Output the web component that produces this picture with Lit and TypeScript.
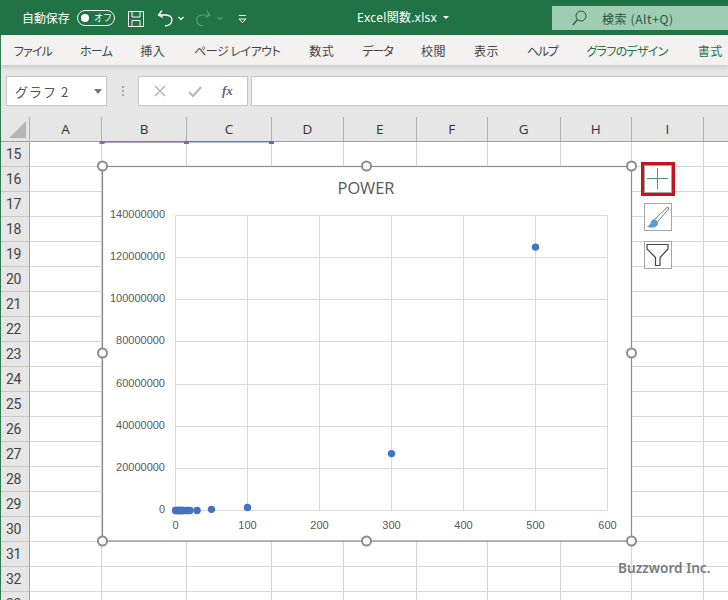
import { LitElement, html, css, svg } from "lit";
import { customElement } from "lit/decorators.js";

const JP = `"Noto Sans CJK JP", "Noto Sans", sans-serif`;
const COLS: [string, number][] = [
  ["A", 72], ["B", 85], ["C", 85], ["D", 72], ["E", 72.5], ["F", 71.5], ["G", 72.5], ["H", 71.5], ["I", 72], ["", 25],
];
const ROWS = Array.from({ length: 19 }, (_, i) => 15 + i);
const TABS: [string, string][] = [
  ["ファイル", "k1"], ["ホーム", "k2"], ["挿入", "kanji"], ["ページ レイアウト", "k3"], ["数式", "kanji"], ["データ", "k4"], ["校閲", "kanji"], ["表示", "kanji"], ["ヘルプ", "k5"],
];
const XS = [0, 1, 2, 3, 4, 5, 6, 7, 8, 9, 10, 12, 15, 17, 20, 30, 50, 100, 300, 500];
const L = 175.5, R = 607.5, T = 215.5, B = 510.5;

@customElement("app-root")
export class AppRoot extends LitElement {
  static styles = css`
    :host { display: block; width: 728px; height: 600px; overflow: hidden; position: relative; font-family: ${css([JP] as unknown as TemplateStringsArray)}; background: #fff; }
    .title { height: 35px; background: #217346; color: #fff; display: flex; align-items: center; font-size: 12px; position: relative; }
    .autosave { margin-left: 22px; width: 55px; font-feature-settings: "palt"; letter-spacing: -0.1px; }
    .toggle { width: 33px; height: 14px; border: 1px solid #fff; border-radius: 9px; display: flex; align-items: center; padding-left: 3px; box-sizing: content-box; gap: 5px; font-size: 9px; }
    .knob { width: 8px; height: 8px; border-radius: 50%; background: #fff; }
    .qa { display: flex; align-items: center; margin-left: 12px; }
    .fname { position: absolute; left: 357px; top: 9px; font-family: "Noto Sans", ${css([JP] as unknown as TemplateStringsArray)}; font-size: 12px; line-height: 17px; white-space: nowrap; letter-spacing: 0.25px; }
    .fcaret { position: absolute; left: 443px; top: 16px; border: 3px solid transparent; border-top: 3px solid #fff; }
    .search { position: absolute; left: 552px; top: 6px; right: 0; height: 24px; background: #9fcdb3; color: #2a5342; display: flex; align-items: center; font-size: 12px; letter-spacing: 0.6px; padding-left: 20px; gap: 15px; }
    .ribbon { height: 30px; background: #f3f2f1; display: flex; align-items: center; padding-left: 14px; gap: 28px; font-size: 12px; color: #444; font-feature-settings: "palt"; white-space: nowrap; position: relative; z-index: 1; box-shadow: 0 2px 5px rgba(0,0,0,.14); }
    .ribbon .k1 { letter-spacing: -0.9px; }
    .ribbon .k2 { letter-spacing: -0.7px; }
    .ribbon .k3 { letter-spacing: -0.5px; margin: 0 1px; }
    .ribbon .k4 { letter-spacing: -1px; }
    .ribbon .k5 { letter-spacing: -1.3px; }
    .ribbon .kanji { letter-spacing: 0.5px; }
    .ribbon .green { color: #217346; letter-spacing: -0.7px; margin-left: 1px; }
    .ribbon .green2 { color: #217346; letter-spacing: 0.5px; margin-left: 2px; }
    .fbar { height: 52px; background: #e6e6e6; display: flex; align-items: center; padding-left: 6px; box-sizing: border-box; }
    .box { height: 30px; background: #fff; border: 1px solid #c6c6c6; box-sizing: border-box; display: flex; align-items: center; position: relative; }
    .namebox { width: 101px; padding-left: 8px; color: #555; font-size: 13px; letter-spacing: 1px; white-space: pre; }
    .ncaret { position: absolute; left: 87px; top: 12px; border: 4px solid transparent; border-top: 5px solid #777; }
    .dots { width: 31px; display: flex; flex-direction: column; align-items: center; gap: 2px; }
    .dots i { width: 2px; height: 2px; background: #a8a8a8; }
    .fxbox { width: 110px; color: #b0b0b0; justify-content: space-around; padding: 0 4px; }
    .fx { font-family: "Liberation Serif", serif; font-style: italic; font-weight: bold; font-size: 13px; color: #666; }
    .input { flex: 1; margin-left: 3px; border-right: none; }
    .sheet { display: grid; grid-template-columns: 30px ${css([COLS.map((c) => c[1] + "px").join(" ")] as unknown as TemplateStringsArray)}; grid-template-rows: 24.6px repeat(19, 25px); }
    .corner, .ch, .rh { background: #e6e6e6; box-sizing: border-box; display: flex; align-items: center; justify-content: center; color: #444; }
    .corner { border-bottom: 1px solid #9f9f9f; border-right: 1px solid #b0b0b0; position: relative; }
    .tri { position: absolute; left: 9px; bottom: 3px; width: 0; height: 0; border-left: 17px solid transparent; border-bottom: 17px solid #b5b5b5; }
    .ch { border-right: 1px solid #b0b0b0; border-bottom: 1px solid #9f9f9f; font-family: "Open Sans", sans-serif; font-size: 13.5px; color: #333; }
    .rh { border-right: 1px solid #9f9f9f; border-bottom: 1px solid #c8c8c8; font-family: Roboto, sans-serif; font-size: 14px; letter-spacing: -0.4px; padding-right: 2px; }
    .cell { border-right: 1px solid #d4d4d4; border-bottom: 1px solid #d4d4d4; box-sizing: border-box; background: #fff; }
    .edge { position: absolute; left: 0; top: 35px; bottom: 0; width: 1px; background: #2f7a52; z-index: 2; }
    .overlay { position: absolute; left: 0; top: 117px; width: 728px; height: 483px; z-index: 3; }
    .mark { position: absolute; left: 618px; top: 558px; z-index: 4; font-family: "Noto Sans", sans-serif; font-weight: 600; font-size: 13.6px; line-height: 20px; color: #7a7a7a; white-space: nowrap; }
  `;

  private chart() {
    const hs = Array.from({ length: 8 }, (_, i) => Math.round(T + ((B - T) * i) / 7 - 0.5) + 0.5);
    const vs = Array.from({ length: 7 }, (_, i) => L + 72 * i);
    const px = (x: number) => L + (x / 600) * (R - L);
    const py = (y: number) => B - (y / 140000000) * (B - T);
    const handles = [[102.5, 166], [366.5, 166], [631.5, 166], [102.5, 353], [631.5, 353], [102.5, 541], [366.5, 541], [631.5, 541]];
    return svg`
      <rect x="102.5" y="166.5" width="529" height="374.5" fill="#fff" stroke="#8c8c8c" stroke-width="1.2"/>
      <text x="366" y="193.5" text-anchor="middle" font-family="Open Sans, sans-serif" font-size="16.4" fill="#595959">POWER</text>
      ${hs.map((y) => svg`<line x1=${L} x2=${R} y1=${y} y2=${y} stroke="#d9d9d9"/>`)}
      ${vs.map((x) => svg`<line x1=${x} x2=${x} y1=${T} y2=${B} stroke="#d9d9d9"/>`)}
      ${hs.map((_, i) => svg`<text x="165" y=${218 + 42.14 * i} text-anchor="end" font-family="Liberation Sans, sans-serif" font-size="11" fill="#595959">${(7 - i) * 20000000}</text>`)}
      ${vs.map((x, i) => svg`<text x=${x} y="529" text-anchor="middle" font-family="Liberation Sans, sans-serif" font-size="11" fill="#595959">${i * 100}</text>`)}
      ${XS.map((x) => svg`<circle cx=${px(x)} cy=${py(x * x * x) - (x === 50 || x === 100 ? 0.9 : 0)} r="3.7" fill="#4472c4"/>`)}
      ${handles.map(([x, y]) => svg`<circle cx=${x} cy=${y} r="4.5" fill="#fff" stroke="#8c8c8c" stroke-width="2"/>`)}

      <rect x="101" y="141.2" width="85" height="1.4" fill="#8f63a8"/>
      <rect x="99.5" y="141" width="5" height="3" fill="#8f63a8"/>
      <rect x="184" y="141" width="5" height="3" fill="#8f63a8"/>
      <rect x="189" y="141.2" width="82" height="1.2" fill="#4472c4"/>
      <rect x="269" y="141" width="5" height="3" fill="#4472c4"/>

      <rect x="642.5" y="163.5" width="31" height="31" fill="none" stroke="#c5141b" stroke-width="3"/>
      <rect x="644.5" y="165.5" width="27" height="27" fill="#fff" stroke="#a6a6a6"/>
      <path d="M647 178.5H668M657.5 168V189" stroke="#4c9a6c" stroke-width="1" fill="none"/>

      <rect x="644.5" y="203.5" width="27" height="27" fill="#fff" stroke="#a6a6a6"/>
      <path d="M654.5 219.5L667 207.5Q669 207 668.5 209L657.5 222Z" fill="#fff" stroke="#777" stroke-width="1"/>
      <path d="M654 219Q651 220 650.5 223.5Q649.5 226 646.5 226.5Q651 228.5 655 227Q658.5 225.5 658 222.5Z" fill="#5b9bd5"/>

      <rect x="644.5" y="241.5" width="27" height="27" fill="#fff" stroke="#a6a6a6"/>
      <path d="M647 244.5H668V249L660 257.5V265.5H655.5V257.5L647 249Z" fill="#fff" stroke="#444" stroke-width="1.2" stroke-linejoin="miter"/>
    `;
  }

  render() {
    return html`
      <div class="edge"></div>
      <div class="title">
        <span class="autosave">自動保存</span>
        <span class="toggle"><i class="knob"></i><span>オフ</span></span>
        <svg class="qa" width="125" height="24" viewBox="0 0 125 24" fill="none">
          <g transform="translate(0,1)">
            <path d="M1.5 4.5H16.5V19.5H1.5ZM5 4.5V10H13V4.5M5 19.5V13.5H13V19.5" stroke="#fff" stroke-width="1" />
          </g>
          <path d="M35 4.5L31.5 9L36 11.5M31.5 9H39Q45 9.5 45 14Q44.5 19.5 38 20" stroke="#fff" stroke-width="1.3"/>
          <path d="M51.5 11L54 13.5L56.5 11" stroke="#fff" stroke-width="1.2"/>
          <path d="M79.5 4.5L83 9L78.5 11.5M83 9H75.5Q69.5 9.5 69.5 14Q70 19.5 76.5 20" stroke="#5b9b78" stroke-width="1.2"/>
          <path d="M90.5 11L93 13.5L95.5 11" stroke="#5b9b78" stroke-width="1.1"/>
          <path d="M112 9.5H119M112 13L115.5 16.5L119 13Z" stroke="#fff" stroke-width="1"/>
        </svg>
        <span class="fname">Excel関数.xlsx</span><i class="fcaret"></i>
        <div class="search">
          <svg width="15" height="16" viewBox="0 0 15 16" fill="none"><circle cx="9" cy="6" r="5" stroke="#2a5342" stroke-width="1"/><path d="M5.5 9.5L0.8 15" stroke="#2a5342" stroke-width="1.2"/></svg>
          <span>検索 (Alt+Q)</span>
        </div>
      </div>
      <div class="ribbon">
        ${TABS.map(([t, k]) => html`<span class=${k}>${t}</span>`)}
        <span class="green">グラフのデザイン</span>
        <span class="green2">書式</span>
      </div>
      <div class="fbar">
        <div class="box namebox">グラフ 2<i class="ncaret"></i></div>
        <div class="dots"><i></i><i></i><i></i></div>
        <div class="box fxbox">
          <svg width="14" height="14" viewBox="0 0 14 14" fill="none"><path d="M2 2L12 12M12 2L2 12" stroke="#b8b8b8" stroke-width="1.6"/></svg>
          <svg width="14" height="14" viewBox="0 0 14 14" fill="none"><path d="M1 8L5 12L13 3" stroke="#b8b8b8" stroke-width="2"/></svg>
          <span class="fx">fx</span>
        </div>
        <div class="box input"></div>
      </div>
      <div class="sheet">
        <div class="corner"><i class="tri"></i></div>
        ${COLS.map((c) => html`<div class="ch">${c[0]}</div>`)}
        ${ROWS.map((r) => html`<div class="rh">${r}</div>${COLS.map(() => html`<div class="cell"></div>`)}`)}
      </div>
      <svg class="overlay" viewBox="0 117 728 483">${this.chart()}</svg>
      <div class="mark">Buzzword Inc.</div>
    `;
  }
}
